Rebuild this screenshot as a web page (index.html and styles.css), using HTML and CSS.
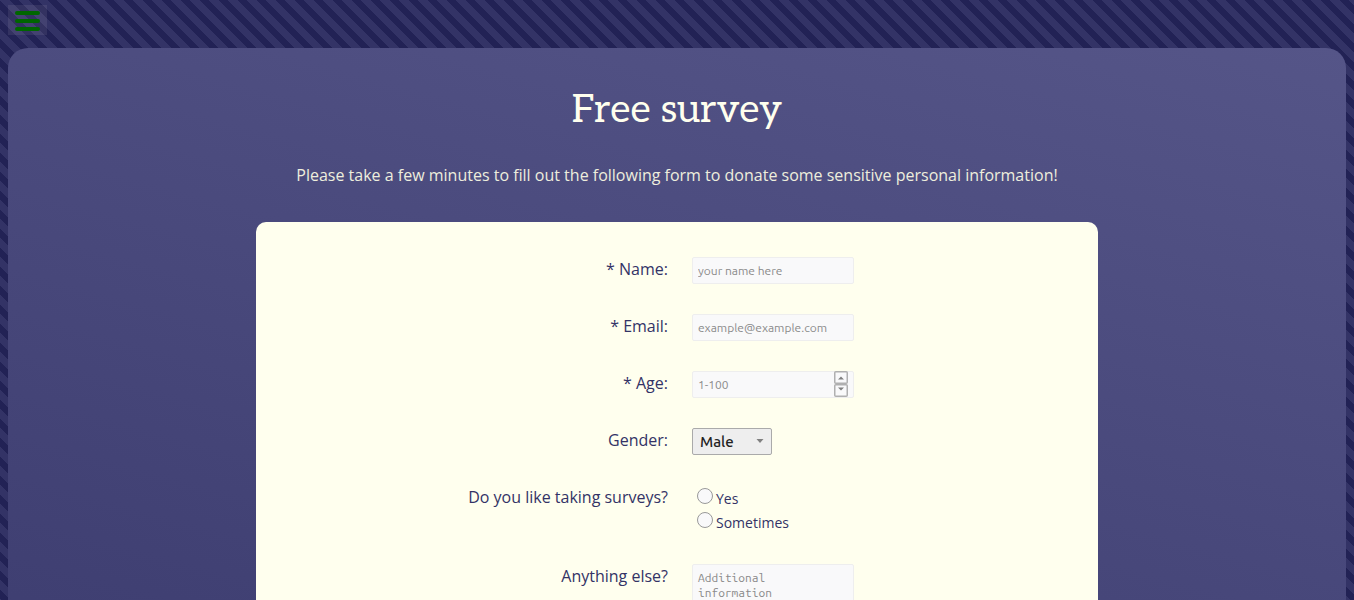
FILE: index.html
```html
<!DOCTYPE html>
<html lang="en">
<head>
<meta charset="utf-8">
<title>Free survey</title>
<link rel="stylesheet" href="styles.css">
</head>
<body>
<header class="topbar">
  <button class="menu" type="button" aria-label="Menu">
    <svg class="menu-icon" viewBox="0 0 27 26" width="27" height="26" aria-hidden="true"><path d="M3 6h21M3 14h21M3 22h21"/></svg>
  </button>
</header>
<main class="panel">
  <h1 class="title">Free survey</h1>
  <p class="intro">Please take a few minutes to fill out the following form to donate some sensitive personal information!</p>
  <form class="survey">
    <div class="row">
      <label class="label" for="name">* Name:</label>
      <div class="field"><input class="control" id="name" type="text" placeholder="your name here"></div>
    </div>
    <div class="row">
      <label class="label" for="email">* Email:</label>
      <div class="field"><input class="control" id="email" type="email" placeholder="example@example.com"></div>
    </div>
    <div class="row">
      <label class="label" for="age">* Age:</label>
      <div class="field">
        <div class="number">
          <input class="control" id="age" type="number" min="1" max="100" placeholder="1-100">
          <svg class="spinner" viewBox="0 0 14 26" width="14" height="26" aria-hidden="true">
            <rect class="spin-box" x="0.75" y="0.75" width="12.5" height="11.5" rx="1"/>
            <rect class="spin-box" x="0.75" y="13.75" width="12.5" height="11.5" rx="1"/>
            <path class="spin-arrow" d="M4 8.500L7 5.500L10 8.500ZM4 16.500L7 19.500L10 16.500Z"/>
          </svg>
        </div>
      </div>
    </div>
    <div class="row">
      <label class="label" for="gender">Gender:</label>
      <div class="field">
        <div class="dropdown">
          <select class="select" id="gender"><option>Male</option></select>
          <svg class="caret" viewBox="0 0 8 4" width="8" height="4" aria-hidden="true"><path d="M0.500 0H7.500L4 4Z"/></svg>
        </div>
      </div>
    </div>
    <div class="row" role="radiogroup" aria-labelledby="likes">
      <span class="label" id="likes">Do you like taking surveys?</span>
      <div class="field options">
        <label class="option"><input class="radio" type="radio" name="likes"><span>Yes</span></label>
        <label class="option"><input class="radio" type="radio" name="likes"><span>Sometimes</span></label>
      </div>
    </div>
    <div class="row">
      <label class="label" for="more">Anything else?</label>
      <div class="field"><textarea class="control area" id="more" placeholder="Additional information"></textarea></div>
    </div>
  </form>
</main>
</body>
</html>
```
FILE: styles.css
```css
* { box-sizing: border-box; }

body {
  margin: 0;
  padding: 0 8px;
  height: 100vh;
  overflow: hidden;
  display: flex;
  flex-direction: column;
  font: 16px/24px "Open Sans", sans-serif;
  color: #336;
  background: linear-gradient(45deg, #336 25%, #225 25% 50%, #336 50% 75%, #225 75%) 0 0 / 19px 19px;
}

.topbar { flex: none; height: 48px; padding-top: 5px; }

.menu {
  display: flex;
  align-items: center;
  justify-content: center;
  width: 39px;
  height: 30px;
  padding: 0;
  border: 0;
  background: rgba(255, 238, 238, 0.08);
}

.menu-icon { fill: none; stroke: #060; stroke-width: 4; stroke-linecap: round; }

.panel {
  flex: 1 0 auto;
  padding-top: 36px;
  border-radius: 20px 20px 0 0;
  background: linear-gradient(15deg, #336, #558) 0 0 / 100% 1040px no-repeat;
  color: #ffe;
  text-align: center;
}

.title {
  margin: 0;
  padding-top: 1px;
  font: 400 39px/52px Aleo, "Roboto Slab", "DejaVu Serif", serif;
}

.intro { margin: 26px 0 35px; color: #eed; }

.survey {
  display: flex;
  flex-direction: column;
  gap: 30px;
  width: 63%;
  margin: 0 auto;
  padding: 35px 24px;
  border-radius: 10px;
  background: #ffe;
  color: #336;
}

.row {
  display: grid;
  grid-template-columns: 1fr 1fr;
  column-gap: 24px;
  padding-left: 6px;
}

.label { text-align: right; }
.field { text-align: left; }

.control {
  display: block;
  width: 162px;
  height: 27px;
  margin: 0;
  padding: 0 5px;
  border: 1px solid #eee;
  border-radius: 2px;
  background: #f9f9fa;
  color: #225;
  font: 12px/16px Ubuntu, "Noto Sans", sans-serif;
}

.control::placeholder { color: #8b8b8b; opacity: 1; }

.number, .dropdown { position: relative; width: max-content; }
.number .control { appearance: textfield; }
.number .control::-webkit-inner-spin-button { appearance: none; }

.spinner { position: absolute; top: 0; right: 6px; pointer-events: none; }
.spin-box { fill: #f9f9fa; stroke: #b0b0b0; stroke-width: 1.5; }
.spin-arrow { fill: #808080; }

.select {
  display: block;
  appearance: none;
  width: 80px;
  height: 27px;
  padding: 0 7px;
  border: 1px solid #aaa;
  border-radius: 2px;
  background: #eee;
  color: #222;
  font: 500 15px/24px Ubuntu, "Noto Sans", sans-serif;
}

.caret { position: absolute; top: 11px; right: 8px; fill: #808080; pointer-events: none; }

.options { padding: 0 0 1px 5px; font-size: 14px; }

.option { display: flex; align-items: flex-start; gap: 3px; height: 24px; }
.option span { padding-top: 2px; line-height: 24px; }

.radio {
  appearance: none;
  width: 16px;
  height: 16px;
  margin: 3px 0 0;
  border: 1px solid #999;
  border-radius: 50%;
  background: #f9f9fa;
}

.area {
  height: 80px;
  padding: 5px 20px 5px 5px;
  resize: none;
  font: 12px/15px "Ubuntu Mono", "DejaVu Sans Mono", monospace;
}
```
